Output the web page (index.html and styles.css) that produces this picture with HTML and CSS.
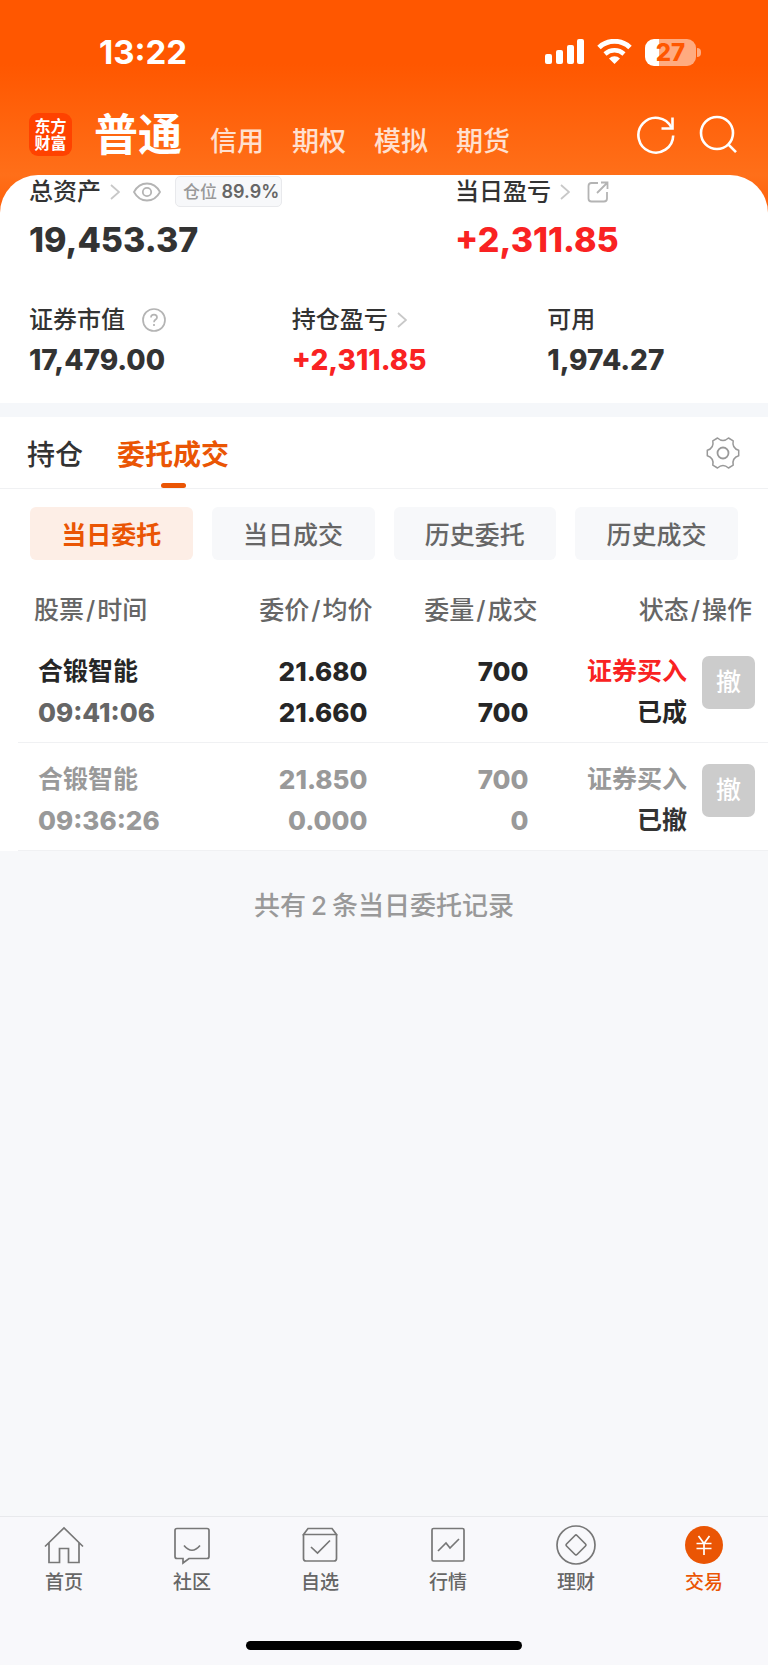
FILE: index.html
```html
<!DOCTYPE html>
<html lang="zh-CN">

<head>
    <title>交易</title>
    <meta charset="utf-8">
    <meta name="viewport" content="width=device-width, initial-scale=1">
    <link rel="stylesheet" href="styles.css">
</head>

<body>
    <div class="top">
        <div class="status-bar">
            <span class="clock">13:22</span>
            <div class="status-icons">
                <svg width="39" height="26" viewBox="0 0 39 26" fill="#fff">
                    <rect x="0" y="15" width="7" height="10" rx="2"/>
                    <rect x="11" y="11" width="7" height="14" rx="2"/>
                    <rect x="22" y="6" width="7" height="19" rx="2"/>
                    <rect x="32" y="0" width="7" height="25" rx="2"/>
                </svg>
                <svg width="35" height="26" viewBox="0 0 35 26" fill="none" stroke="#fff">
                    <path d="M2 8.5a22.5 22.5 0 0 1 31 0" stroke-width="5"/>
                    <path d="M8 15a14 14 0 0 1 19 0" stroke-width="4.5"/>
                    <path d="M12 19.4a8 8 0 0 1 11 0L17.5 25z" fill="#fff" stroke="none"/>
                </svg>
                <div class="battery"><span class="battery-body">27</span><span class="battery-tip"></span></div>
            </div>
        </div>

        <header class="header">
            <div class="logo"><span>东方</span><span>财富</span></div>
            <nav class="accounts">
                <a href="#" class="account current">普通</a>
                <a href="#" class="account">信用</a>
                <a href="#" class="account">期权</a>
                <a href="#" class="account">模拟</a>
                <a href="#" class="account">期货</a>
            </nav>
            <button class="icon-btn" aria-label="刷新">
                <svg width="40" height="40" viewBox="0 0 40 40" fill="none" stroke="#fff" stroke-width="2.6">
                    <path d="M37.2 20.5A17.4 17.4 0 1 1 35.4 12.5"/>
                    <path d="M36.5 2.5v11H25.5"/>
                </svg>
            </button>
            <button class="icon-btn" aria-label="搜索">
                <svg width="40" height="40" viewBox="0 0 40 40" fill="none" stroke="#fff" stroke-width="2.6">
                    <circle cx="19" cy="18" r="16"/>
                    <path d="M30 29.2l8 8"/>
                </svg>
            </button>
        </header>

        <section class="assets">
            <div class="assets-main">
                <div>
                    <div class="label">
                        <span>总资产</span>
                        <svg class="arrow" width="10" height="16" viewBox="0 0 10 16"><path d="M1 1l8 7-8 7"/></svg>
                        <svg class="eye" width="28" height="20" viewBox="0 0 28 20" fill="none" stroke="#b4b4b4" stroke-width="1.8">
                            <path d="M1 10C4 4.5 8.5 1.5 14 1.5S24 4.5 27 10C24 15.5 19.5 18.5 14 18.5S4 15.5 1 10z"/>
                            <circle cx="14" cy="10" r="4.2"/>
                        </svg>
                        <span class="position-tag">仓位 <b>89.9%</b></span>
                    </div>
                    <div class="amount big">19,453.37</div>
                </div>
                <div>
                    <div class="label">
                        <span>当日盈亏</span>
                        <svg class="arrow" width="10" height="16" viewBox="0 0 10 16"><path d="M1 1l8 7-8 7"/></svg>
                        <svg class="share" width="22" height="22" viewBox="0 0 22 22" fill="none" stroke="#b4b4b4" stroke-width="1.8">
                            <path d="M11 2H4.5Q1.5 2 1.5 5v12.5q0 3 3 3H17q3 0 3-3V11"/>
                            <path d="M10 12L20 2M14 1.5h6.5V8"/>
                        </svg>
                    </div>
                    <div class="amount big up">+2,311.85</div>
                </div>
            </div>
            <div class="assets-sub">
                <div>
                    <div class="label">
                        <span>证券市值</span>
                        <svg class="help" width="24" height="24" viewBox="0 0 24 24" fill="none" stroke="#b4b4b4" stroke-width="1.7">
                            <circle cx="12" cy="12" r="11"/>
                            <path d="M9 9.6Q9 6.7 12 6.7T15 9.4C15 11.5 12 11.6 12 14.2M12 16v2"/>
                        </svg>
                    </div>
                    <div class="amount">17,479.00</div>
                </div>
                <div>
                    <div class="label">
                        <span>持仓盈亏</span>
                        <svg class="arrow" width="10" height="16" viewBox="0 0 10 16"><path d="M1 1l8 7-8 7"/></svg>
                    </div>
                    <div class="amount up">+2,311.85</div>
                </div>
                <div>
                    <div class="label"><span>可用</span></div>
                    <div class="amount">1,974.27</div>
                </div>
            </div>
        </section>
    </div>

    <main class="orders">
        <div class="tabs">
            <button class="tab">持仓</button>
            <button class="tab active">委托成交</button>
            <button class="icon-btn settings" aria-label="设置">
                <svg width="34" height="34" viewBox="-17 -17 34 34" fill="none" stroke="#999" stroke-width="1.5" stroke-linejoin="round">
                    <path d="M15.7 -2.7V2.7Q8.7 5 10.2 12.2L5.5 15Q0 10 -5.5 15L-10.2 12.2Q-8.7 5 -15.7 2.7V-2.7Q-8.7 -5 -10.2 -12.2L-5.5 -15Q0 -10 5.5 -15L10.2 -12.2Q8.7 -5 15.7 -2.7z"/>
                    <circle r="5.5" stroke-width="1.8"/>
                </svg>
            </button>
        </div>

        <div class="chips">
            <button class="chip active">当日委托</button>
            <button class="chip">当日成交</button>
            <button class="chip">历史委托</button>
            <button class="chip">历史成交</button>
        </div>

        <table class="order-table">
            <colgroup>
                <col class="col-name">
                <col class="col-price">
                <col class="col-qty">
                <col class="col-state">
                <col class="col-action">
            </colgroup>
            <thead>
                <tr>
                    <th class="first">股票<span class="slash">/</span>时间</th>
                    <th>委价<span class="slash">/</span>均价</th>
                    <th>委量<span class="slash">/</span>成交</th>
                    <th class="last" colspan="2">状态<span class="slash">/</span>操作</th>
                </tr>
            </thead>
            <tbody>
                <tr>
                    <td class="name">合锻智能<br><span class="time">09:41:06</span></td>
                    <td class="price">21.680<br>21.660</td>
                    <td class="qty">700<br>700</td>
                    <td class="state"><span class="up">证券买入</span><br>已成</td>
                    <td class="action"><button class="cancel" disabled>撤</button></td>
                </tr>
                <tr class="cancelled">
                    <td class="name">合锻智能<br><span class="time">09:36:26</span></td>
                    <td class="price">21.850<br>0.000</td>
                    <td class="qty">700<br>0</td>
                    <td class="state">证券买入<br><span class="done">已撤</span></td>
                    <td class="action"><button class="cancel" disabled>撤</button></td>
                </tr>
            </tbody>
        </table>
    </main>

    <p class="total">共有<span class="count">2</span>条当日委托记录</p>

    <footer class="bottom">
        <nav class="tabbar">
            <a href="#" class="item">
                <svg width="40" height="40" viewBox="0 0 40 40">
                    <path d="M1 21.5L20 3l19 18.5M5 18v19.5h10.5V23.5h9V37.5H35V18"/>
                </svg>
                首页
            </a>
            <a href="#" class="item">
                <svg width="40" height="40" viewBox="0 0 40 40">
                    <path d="M5 3.5h30q2 0 2 2V31.5q0 2-2 2H17L11 38v-4.5H5q-2 0-2-2V5.5q0-2 2-2z"/>
                    <path d="M12 20.5q8 9.5 16 0"/>
                </svg>
                社区
            </a>
            <a href="#" class="item">
                <svg width="40" height="40" viewBox="0 0 40 40">
                    <path d="M3.5 9.5v24q0 2.5 2.5 2.5h28q2.5 0 2.5-2.5v-24M3.5 9.5L8 3.5h24l4.5 6zM11 22l6.5 6L30 15.5"/>
                </svg>
                自选
            </a>
            <a href="#" class="item">
                <svg width="40" height="40" viewBox="0 0 40 40">
                    <rect x="4" y="3.5" width="32" height="32.5" rx="1.5"/>
                    <path d="M10 26l8-8 4 5 9-9"/>
                </svg>
                行情
            </a>
            <a href="#" class="item">
                <svg width="40" height="40" viewBox="0 0 40 40">
                    <circle cx="20" cy="20" r="19"/>
                    <path d="M19 10.5q1-1 2 0l8.5 8.5q1 1 0 2L21 29.5q-1 1-2 0L10.5 21q-1-1 0-2z"/>
                </svg>
                理财
            </a>
            <a href="#" class="item active">
                <svg width="40" height="40" viewBox="0 0 40 40">
                    <circle cx="20" cy="20" r="19" fill="#ea5504" stroke="none"/>
                    <path stroke="#fff" d="M14.5 11l5.5 7.5 5.5-7.5M12.500 18.5h15M12.5 23.5h15M20 18.5V30"/>
                </svg>
                交易
            </a>
        </nav>
        <div class="home-indicator"></div>
    </footer>
</body>

</html>
```

FILE: styles.css
```css
* {
    box-sizing: border-box;
}

body {
    display: flex;
    flex-direction: column;
    min-height: 100vh;
    margin: 0;
    background: #f7f8fa;
    color: #333;
    font-family: Inter, "Noto Sans CJK SC", sans-serif;
    font-size: 25px;
}

button {
    margin: 0;
    padding: 0;
    border: 0;
    background: none;
    color: inherit;
    font: inherit;
}

a {
    color: inherit;
    text-decoration: none;
}

svg {
    display: block;
    flex: none;
}

.up {
    color: #f92222;
}

/* orange top */
.top {
    background: linear-gradient(#ff5700 0, #ff5700 64px, #ff6f19 175px, #ff5f08 215px);
}

.status-bar {
    display: flex;
    align-items: center;
    justify-content: space-between;
    height: 104px;
    padding: 0 67px 0 99px;
    color: #fff;
}

.clock {
    font-size: 33px;
    font-weight: 700;
}

.status-icons {
    display: flex;
    align-items: center;
    gap: 13px;
}

.battery {
    display: flex;
    align-items: center;
    gap: 1px;
}

.battery-body {
    width: 51px;
    height: 27px;
    border-radius: 9px;
    background: linear-gradient(90deg, #fff 14px, #ffab80 14px);
    color: #ff5700;
    font-size: 24px;
    font-weight: 800;
    line-height: 27px;
    text-align: center;
}

.battery-tip {
    width: 4px;
    height: 9px;
    border-radius: 0 4px 4px 0;
    background: #ffab80;
}

.header {
    display: flex;
    align-items: center;
    gap: 22px;
    height: 71px;
    padding: 0 30px 10px 29px;
    color: #fff;
}

.logo {
    display: flex;
    flex-direction: column;
    justify-content: center;
    width: 43px;
    height: 43px;
    border-radius: 9px;
    background: #ff4200;
    font-size: 16px;
    font-weight: 700;
    line-height: 17px;
    text-align: center;
}

.accounts {
    display: flex;
    flex: 1;
    align-items: baseline;
    gap: 28px;
    padding-top: 7px;
    line-height: 60px;
}

.account {
    color: #ffe0d0;
    font-size: 27px;
    font-weight: 500;
}

.account.current {
    color: #fff;
    font-size: 44px;
    font-weight: 700;
}

/* assets card */
.assets {
    padding: 0 29px 25px;
    border-radius: 38px 38px 0 0;
    background: #fff;
}

.assets-main {
    display: grid;
    grid-template-columns: 60% 40%;
    margin-bottom: 41px;
}

.assets-sub {
    display: grid;
    grid-template-columns: 37% 36% 27%;
}

.label {
    display: flex;
    align-items: center;
    height: 33px;
    font-size: 24px;
    font-weight: 500;
    line-height: 33px;
}

.arrow {
    margin-left: 9px;
    fill: none;
    stroke: #c8c8c8;
    stroke-width: 1.8;
}

.eye {
    margin-left: 13px;
}

.help,
.share {
    margin-left: 17px;
}

.position-tag {
    height: 31px;
    margin-left: 14px;
    padding: 0 2px 0 7px;
    border: 1px solid #e8e9ec;
    border-radius: 5px;
    background: #f7f8fa;
    color: #999;
    font-size: 17px;
    line-height: 29px;
}

.position-tag b {
    color: #666;
    font-size: 18px;
    font-weight: 600;
}

.amount {
    margin-top: 6px;
    font-size: 28px;
    font-weight: 800;
    line-height: 36px;
}

.amount.big {
    margin-top: 10px;
    font-size: 34px;
    line-height: 44px;
}

/* orders */
.orders {
    border-top: 14px solid #f5f7fa;
    background: #fff;
}

.tabs {
    display: flex;
    align-items: center;
    gap: 34px;
    height: 72px;
    padding: 0 28px 0 27px;
    border-bottom: 1px solid #f0f1f3;
}

.tab {
    position: relative;
    height: 71px;
    font-size: 28px;
    font-weight: 500;
}

.tab.active {
    color: #ea5504;
    font-weight: 700;
}

.tab.active::after {
    content: "";
    position: absolute;
    bottom: 0;
    left: 50%;
    width: 25px;
    height: 5px;
    margin-left: -12px;
    border-radius: 3px;
    background: #ea5504;
}

.settings {
    margin-left: auto;
}

.chips {
    display: grid;
    grid-template-columns: repeat(4, 1fr);
    gap: 19px;
    padding: 18px 30px 21px;
}

.chip {
    height: 53px;
    padding-bottom: 2px;
    border-radius: 6px;
    background: #f7f8fa;
    color: #666;
    font-weight: 500;
}

.chip.active {
    background: #fdeee6;
    color: #ea5504;
    font-weight: 700;
}

.order-table {
    width: calc(100% - 18px);
    margin-left: 18px;
    border-collapse: separate;
    border-spacing: 0;
    table-layout: fixed;
    color: #262626;
    text-align: right;
}

.col-name {
    width: 182px;
}

.col-price {
    width: 23%;
}

.col-qty {
    width: 22%;
}

.col-action {
    width: 66px;
}

.order-table th {
    height: 54px;
    padding: 0;
    color: #666;
    font-weight: 500;
}

.order-table .first {
    padding-left: 16px;
    text-align: left;
}

.order-table .last {
    padding-right: 16px;
}

.slash {
    margin: 0 2px;
}

.order-table td {
    padding: 16px 0 8px;
    border-bottom: 1px solid #f0f1f3;
    font-weight: 700;
    line-height: 41px;
    vertical-align: top;
}

.order-table .name {
    padding-left: 20px;
    text-align: left;
}

.time,
.order-table .price,
.order-table .qty {
    font-size: 26px;
    font-weight: 800;
}

.time {
    color: #666;
}

.order-table .price {
    padding-right: 5px;
}

.order-table .qty {
    padding-right: 9px;
}

.order-table .state {
    padding-right: 15px;
}

.order-table .action {
    padding: 21px 13px 0 0;
}

.cancel {
    display: block;
    width: 53px;
    height: 53px;
    border-radius: 7px;
    background: #ccc;
    color: #fff;
    font-weight: 500;
}

.cancelled,
.cancelled .time {
    color: #999;
}

.cancelled .done {
    color: #333;
}

.total {
    margin: 35px 0;
    color: #999;
    font-size: 26px;
    font-weight: 500;
    line-height: 40px;
    text-align: center;
}

.count {
    margin: 0 5px;
}

/* bottom bar */
.bottom {
    margin-top: auto;
    padding-bottom: 15px;
    border-top: 1px solid #e8e9ec;
    background: #f8f8fb;
}

.tabbar {
    display: grid;
    grid-template-columns: repeat(6, 1fr);
    padding-top: 8px;
}

.item {
    display: flex;
    flex-direction: column;
    align-items: center;
    gap: 4px;
    color: #666;
    font-size: 19px;
    font-weight: 500;
    line-height: 28px;
}

.item svg {
    fill: none;
    stroke: #777;
    stroke-width: 1.7;
}

.item.active {
    color: #ea5504;
}

.home-indicator {
    width: 36%;
    height: 9px;
    margin: 44px auto 0;
    border-radius: 5px;
    background: #000;
}
```
